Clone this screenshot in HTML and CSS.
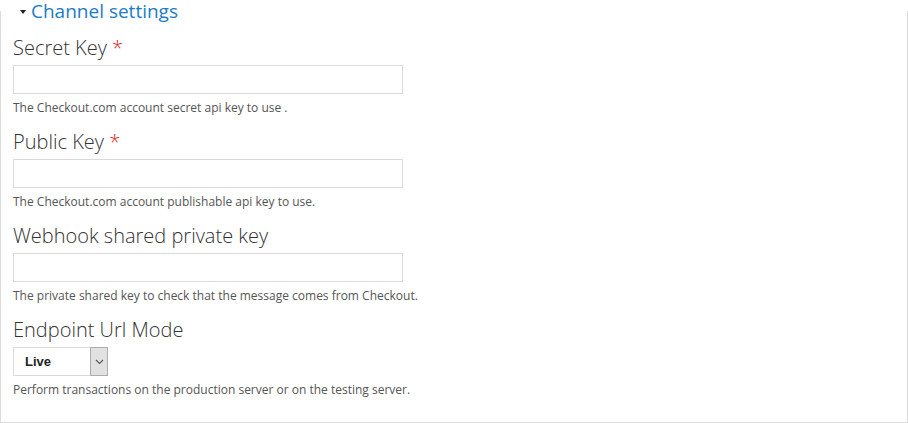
FILE: index.html
```html
<!DOCTYPE html>
<html lang="en">
<head>
<meta charset="utf-8">
<title>Channel settings</title>
<link rel="stylesheet" href="styles.css">
</head>
<body>
<fieldset class="settings">
  <legend class="settings-legend"><span class="caret"></span>Channel settings</legend>

  <div class="field">
    <label class="field-label" for="secret">Secret Key <span class="req">*</span></label>
    <input class="text-input" id="secret" type="text">
    <div class="field-desc">The Checkout.com account secret api key to use .</div>
  </div>

  <div class="field">
    <label class="field-label" for="public">Public Key <span class="req">*</span></label>
    <input class="text-input" id="public" type="text">
    <div class="field-desc">The Checkout.com account publishable api key to use.</div>
  </div>

  <div class="field">
    <label class="field-label" for="webhook">Webhook shared private key</label>
    <input class="text-input" id="webhook" type="text">
    <div class="field-desc">The private shared key to check that the message comes from Checkout.</div>
  </div>

  <div class="field">
    <label class="field-label" for="mode">Endpoint Url Mode</label>
    <div class="select-wrap">
      <select class="select" id="mode">
        <option>Live</option>
        <option>Test</option>
      </select>
      <span class="select-arrow">
        <svg width="9" height="6" viewBox="0 0 9 6"><path d="M1 1 L4.5 4.5 L8 1" fill="none" stroke="#555" stroke-width="1.1"/></svg>
      </span>
    </div>
    <div class="field-desc">Perform transactions on the production server or on the testing server.</div>
  </div>
</fieldset>
</body>
</html>
```
FILE: styles.css
```css
html, body {
  margin: 0;
  padding: 0;
  background: #fff;
}

body {
  font-family: "Open Sans", "DejaVu Sans", sans-serif;
  color: #333;
  width: 908px;
  height: 423px;
  overflow: hidden;
}

.settings {
  box-sizing: border-box;
  margin: 0;
  width: 908px;
  height: 423px;
  padding: 12px 12px 0 12px;
  border: 1px solid #dcdcdc;
  border-top: none;
  min-width: 0;
}

.settings-legend {
  padding: 0 0 0 7px;
  margin: 0;
  font-size: 19px;
  line-height: 22px;
  color: #1b7bc5;
  font-weight: 400;
  display: flex;
  align-items: center;
}

.caret {
  display: inline-block;
  width: 0;
  height: 0;
  border-left: 3.5px solid transparent;
  border-right: 3.5px solid transparent;
  border-top: 4px solid #222;
  margin-right: 5px;
  margin-top: 1px;
}

.field {
  display: flex;
  flex-direction: column;
  align-items: flex-start;
  margin-bottom: 12px;
}

.field-label {
  font-size: 20px;
  line-height: 28px;
  font-weight: 300;
  color: #333;
  margin-bottom: 3px;
}

.req {
  color: #e2231a;
}

.text-input {
  box-sizing: border-box;
  width: 390px;
  height: 29px;
  margin: 0;
  border: 1px solid #dadada;
  background: #fff;
  padding: 0 6px;
  font-family: inherit;
  font-size: 13px;
  outline: none;
}

.field-desc {
  margin-top: 6px;
  font-size: 12px;
  line-height: 16px;
  color: #555;
}

.select-wrap {
  position: relative;
  width: 95px;
  height: 29px;
}

.select {
  appearance: none;
  -webkit-appearance: none;
  box-sizing: border-box;
  width: 95px;
  height: 29px;
  margin: 0;
  border: 1px solid #dadada;
  border-radius: 0;
  background: #fff;
  padding: 0 0 0 11px;
  font-family: "Liberation Sans", Arial, sans-serif;
  font-size: 13px;
  font-weight: 700;
  color: #222;
  outline: none;
}

.select-arrow {
  position: absolute;
  top: 0;
  right: 0;
  box-sizing: border-box;
  width: 18px;
  height: 29px;
  background: #e1e1e1;
  border: 1px solid #adadad;
  display: flex;
  align-items: center;
  justify-content: center;
  pointer-events: none;
}
```
